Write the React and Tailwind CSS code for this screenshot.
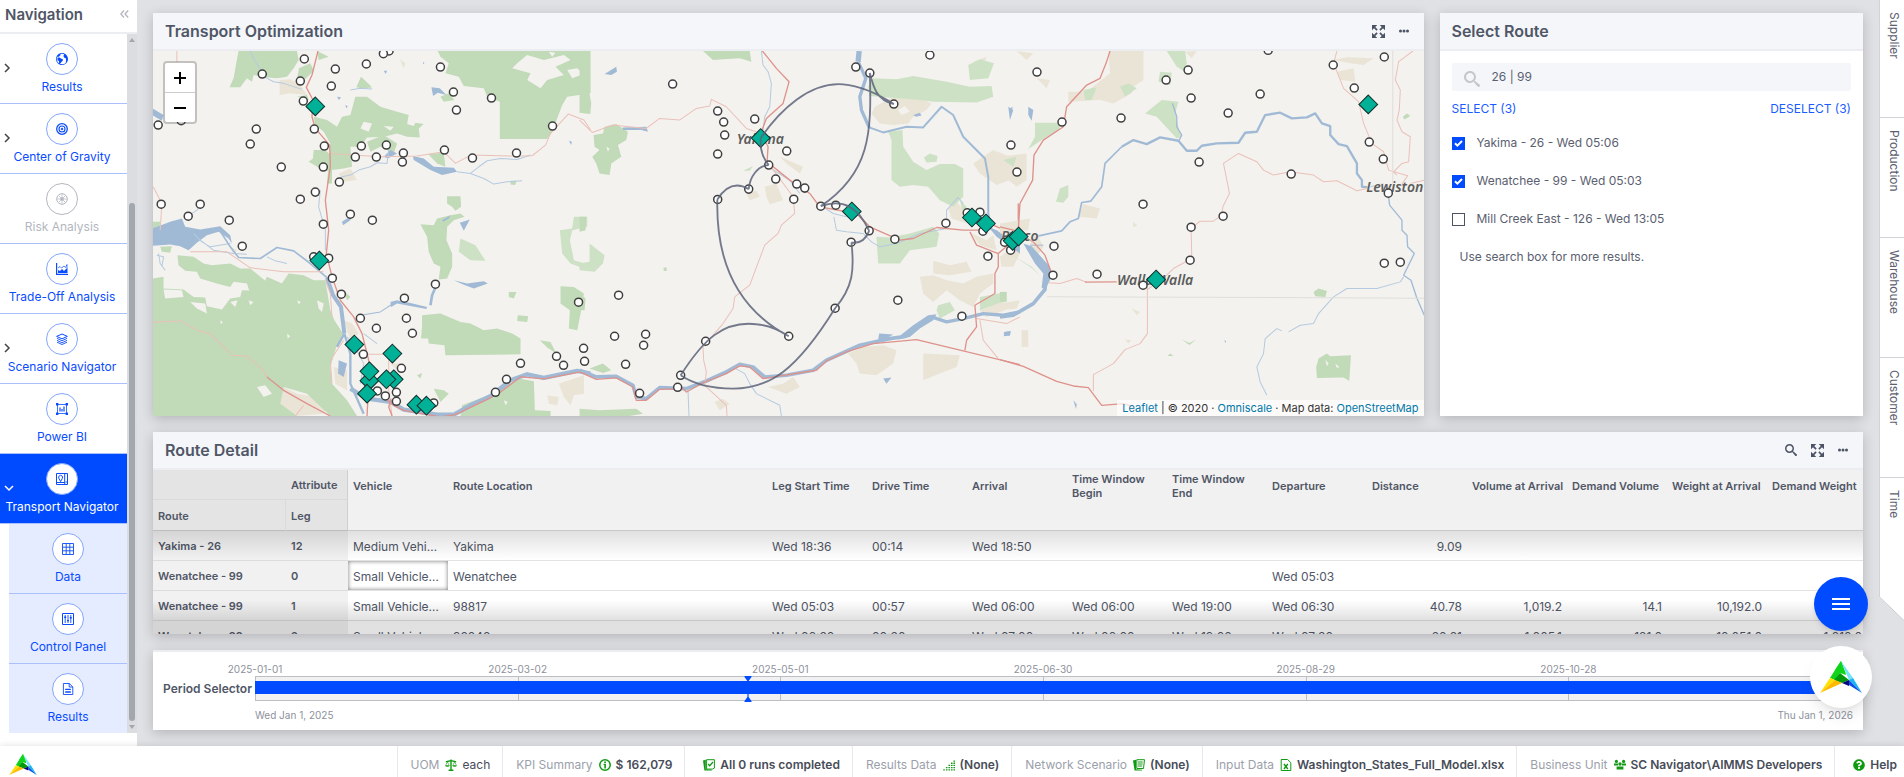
import React, { useState } from 'react';
import { ImEarth, ImEnlarge, ImSearch } from 'react-icons/im';
import { FaQuestionCircle } from 'react-icons/fa';

const Logo = ({ className }) => (
  <svg viewBox="0 0 42 32" className={className} aria-hidden="true">
    <path d="M21 0L15 9L20 11L26 13Z" fill="#00e800" />
    <path d="M15 9L10 17L15 19L20 12L26 14L21 0Z" fill="#0fd41a" />
    <path d="M20 12L14 19L22 22L29 19Z" fill="#009a0c" />
    <path d="M21 0L33 17L29 19Z" fill="#6fe3f7" />
    <path d="M33 17L42 32L29 19Z" fill="#19b5f5" />
    <path d="M29 19L42 32L29 24Z" fill="#0a50e8" />
    <path d="M29 19L22 22L29 25Z" fill="#06067e" />
    <path d="M10 17L15 19L0 32Z" fill="#ffe100" />
    <path d="M15 19L22 22L0 32Z" fill="#ffba00" />
  </svg>
);

const Svg = ({ children, size = 'size-3' }) => (
  <svg
    viewBox="0 0 12 12"
    className={size}
    fill="none"
    stroke="currentColor"
    aria-hidden="true"
  >
    {children}
  </svg>
);

const icons = {
  earth: <ImEarth className="size-3" />,
  target: (
    <Svg>
      <circle cx="6" cy="6" r="5.3" strokeWidth="1.3" />
      <circle cx="6" cy="6" r="3" strokeWidth="1.1" />
      <circle cx="6" cy="6" r="1" fill="currentColor" strokeWidth="0.5" />
    </Svg>
  ),
  compass: (
    <Svg>
      <circle cx="6" cy="6" r="5.3" strokeWidth="1" />
      <path d="M6 1v10M1 6h10M3 3l6 6M9 3l-6 6" strokeWidth="0.7" />
      <circle cx="6" cy="6" r="1.8" fill="currentColor" strokeWidth="0" />
    </Svg>
  ),
  stats: (
    <Svg>
      <path d="M0.6 0v11.4H12" strokeWidth="1.2" />
      <path
        d="M2 10V7l2 1 2-2 2 2 2-2 1.5-0.5V10z"
        fill="currentColor"
        stroke="none"
      />
      <path d="M2 5l2-1.5L5.5 5 8 3l1.5 1.5 1.5-3V6" strokeWidth="0.7" />
    </Svg>
  ),
  stack: (
    <Svg>
      <path d="M6 1l5.4 2.4L6 5.8 0.6 3.4z" strokeWidth="1" />
      <path
        d="M1 5.4L6 7.7l5-2.3M1 7.4l5 2.3 5-2.3M1 9.2l5 2.3 5-2.3"
        strokeWidth="0.9"
      />
    </Svg>
  ),
  powerbi: (
    <Svg>
      <path d="M1.5 1.5h9v9h-9z" strokeWidth="0.8" />
      <path
        d="M0 0h2.4v2.4H0zM9.6 0H12v2.4H9.6zM0 9.6h2.4V12H0zM9.6 9.6H12V12H9.6zM3.4 4.4h1.2v4.2H3.4zM5.4 6h1.2v2.6H5.4zM7.4 3.4h1.2v5.2H7.4z"
        fill="currentColor"
        stroke="none"
      />
    </Svg>
  ),
  mapPin: (
    <Svg>
      <path d="M0.5 0.5h11v11h-11zM8.7 0.5v11M0.5 9.5h8.2" strokeWidth="1" />
      <path d="M4.6 8.6L2.9 5.4a2 2 0 1 1 3.4 0z" strokeWidth="1" />
      <path d="M9.6 9h1.6" strokeWidth="1" />
    </Svg>
  ),
  grid: (
    <Svg>
      <path
        d="M0.5 0.5h11v11h-11zM0.5 4.2h11M0.5 7.8h11M4.2 0.5v11M7.8 0.5v11"
        strokeWidth="0.9"
      />
    </Svg>
  ),
  sliders: (
    <Svg>
      <path d="M0.5 0.5h11v11h-11z" strokeWidth="1" />
      <path d="M3.2 2v8M6 2v8M8.8 2v8" strokeWidth="0.9" />
      <path d="M2.2 4.2h2M5 7.6h2M7.8 4.8h2" strokeWidth="1.4" />
    </Svg>
  ),
  file: (
    <Svg>
      <path d="M1.4 0.5h6L10.8 4v7.5H1.4zM7.2 0.5V4h3.6" strokeWidth="0.9" />
      <path d="M3.2 6.4h5.6M3.2 9h5.6" strokeWidth="1.3" />
    </Svg>
  ),
  scale: (
    <Svg>
      <path d="M6 0.5v11M3.6 11.2h4.8M0.8 2.6C3 3 4 1.6 6 1.6s3 1.4 5.2 1" strokeWidth="1.4" />
      <path d="M2.4 2.8L0.6 6.4M2.4 2.8L4.2 6.4M9.6 2.8L7.8 6.4M9.6 2.8L11.4 6.4" strokeWidth="0.6" />
      <path d="M0.2 6.2h4.4a2.2 1.6 0 0 1-4.4 0zM7.4 6.2h4.4a2.2 1.6 0 0 1-4.4 0z" fill="currentColor" stroke="none" />
    </Svg>
  ),
  info: (
    <Svg>
      <circle cx="6" cy="6" r="5.2" strokeWidth="1.5" />
      <path d="M5.2 2.6h1.7v1.3H5.2zM4.6 4.7h2.3v4.8H5.3V6H4.6z" fill="currentColor" stroke="none" />
    </Svg>
  ),
  runs: (
    <Svg>
      <path d="M3.6 0.7h7.8v8.4l-2 1H3.6z" strokeWidth="1" />
      <path d="M0 1.6l2.8-0.9v9.6l6 0.4v0.9H1.4z" fill="currentColor" stroke="none" />
      <path d="M5.2 5l1.5 1.7L10 3" strokeWidth="1.3" />
    </Svg>
  ),
  bars: (
    <Svg>
      <path
        d="M1 11.5V9.2M3.7 11.5V7M6.2 11.5V5M8.8 11.5V3M11.2 11.5V0.5"
        strokeWidth="1.5"
        strokeDasharray="1.3 0.9"
      />
    </Svg>
  ),
  notes: (
    <Svg>
      <path d="M3.8 0.7h7.7l-1 8.8H3.8z" strokeWidth="1" />
      <path d="M5 3h4.8M5 5h4.6M5 7h4.2" strokeWidth="1" />
      <path d="M0 1.6l3-0.9v9.6l6 0.4v0.9H1.6z" fill="currentColor" stroke="none" />
    </Svg>
  ),
  excel: (
    <Svg>
      <path d="M1.2 0.5h6.4l3.2 3.2v7.8H1.2z" strokeWidth="1" />
      <path d="M4 5l3.8 5M7.8 5L4 10" strokeWidth="1.4" />
    </Svg>
  ),
  team: (
    <Svg>
      <g fill="currentColor" stroke="none">
        <circle cx="2.4" cy="2.4" r="1.6" />
        <circle cx="9.6" cy="2.4" r="1.6" />
        <circle cx="6" cy="5" r="1.7" />
        <path d="M0 4.4h4v2.2H0zM8 4.4h4v2.2H8zM2.6 7.4h6.8v3.2H2.6z" />
      </g>
    </Svg>
  ),
  help: <FaQuestionCircle className="size-3" />,
};

const navItems = [
  { label: 'Results', icon: 'earth', arrow: true },
  { label: 'Center of Gravity', icon: 'target', arrow: true },
  { label: 'Risk Analysis', icon: 'compass', disabled: true },
  { label: 'Trade-Off Analysis', icon: 'stats' },
  { label: 'Scenario Navigator', icon: 'stack', arrow: true },
  { label: 'Power BI', icon: 'powerbi' },
  { label: 'Transport Navigator', icon: 'mapPin', active: true },
  { label: 'Data', icon: 'grid', child: true },
  { label: 'Control Panel', icon: 'sliders', child: true },
  { label: 'Results', icon: 'file', child: true },
];

const NavItem = ({ item }) => {
  let tone = 'text-[#0a4bff] pr-[3px]';
  if (item.disabled) tone = 'text-[#b3b7c0] pr-[3px]';
  if (item.active) tone = 'bg-[#004bff] text-white pr-[3px]';
  if (item.child) tone = 'bg-[#e5ecff] ml-[9px] text-[#0a4bff]';

  return (
    <li>
      <a
        href="#"
        className={`relative flex h-[70px] flex-col items-center border-b border-[#a9c0fb] pt-[9px] ${tone}`}
      >
        {(item.arrow || item.active) && (
          <svg
            viewBox="0 0 10 10"
            className={`absolute top-[29px] size-[10px] ${
              item.active ? 'left-1 rotate-90' : 'left-[2px] text-[#444]'
            }`}
            fill="none"
            stroke="currentColor"
            strokeWidth="1.5"
          >
            <path d="M3 1l4 4-4 4" />
          </svg>
        )}
        <span
          className={`flex size-8 items-center justify-center rounded-full border bg-white ${
            item.disabled ? 'border-[#b3b7c0]' : 'border-[#85a6fd]'
          } ${item.active ? 'text-[#0a4bff]' : ''}`}
        >
          {icons[item.icon]}
        </span>
        <span className="mt-1 text-xs leading-4 whitespace-nowrap">
          {item.label}
        </span>
      </a>
    </li>
  );
};

// The map is cut in three tiles, each drawn at three times the screen size
const tiles = [
  {
    x: -2,
    land: '265,153 440,153 445,180 430,205 410,230 380,235 345,232 310,225 305,245 290,235 270,262 238,262 250,235 258,190|446,205 480,190 490,212 462,240 440,238|615,290 650,290 690,320 740,335 775,345 770,372 790,378 795,368 820,372 805,385 808,412 770,410 740,400 700,410 650,412 630,440 600,440 605,500 580,505 545,510 545,550 530,550 540,430 520,395 495,375 490,350 530,360 560,380 575,350 600,345|650,425 700,405 740,430 730,460 690,440 660,455|490,450 525,450 540,465 538,515 510,505 475,485 488,475|862,153 1320,153 1320,280 1250,290 1235,315 1205,395 1190,417 1048,417 1048,305 1010,290 1000,265 940,258 925,230 885,220 895,190 870,170|890,588 930,588 932,620 915,632 905,620 890,610|810,672 850,675 860,655 900,645 930,640 942,650 910,660 890,680 888,720 905,760 905,800 890,835 865,838 870,800 850,790 835,755 830,710|6,835 40,830 40,865 100,868 130,890 165,892 170,918 215,928 240,895 270,890 275,870 330,872 350,830 395,850 415,820 460,825 490,840 525,840 530,870 540,930 552,960 578,1000 558,1040 540,1100 545,1150 590,1200 620,1247 540,1247 470,1180 400,1160 390,1210 440,1247 6,1247|82,765 130,770 160,790 185,795 240,790 270,805 300,805 355,850 350,885 300,880 290,850 250,845 240,860 200,850 150,835 140,815 105,812 85,795|815,945 870,940 930,965 960,970 1000,990 1040,985 1085,1000 1110,1015 1110,1062 885,1065 882,1035 835,1030 833,1015 812,1015 815,975|1168,1020 1200,1025 1217,1060 1190,1042|1230,858 1270,860 1300,880 1290,940 1280,990 1255,985 1258,930 1230,910|1075,875 1098,875 1090,895 1075,890|1102,945 1133,948 1130,965 1100,962|930,1247 935,1215 1000,1190 1060,1160 1105,1135 1150,1143 1153,1230 1200,1232 1200,1247|618,262 632,230 648,245 665,262 640,266|870,290 895,280 912,300 880,305|833,462 880,458 885,500 860,490|500,153 535,170 505,180|1080,542 1098,542 1094,555 1080,553|6,665 30,665 28,685 6,685|30,740 65,738 60,758 35,755|440,290 470,285 475,300|850,1165 880,1170 895,1180 870,1205|800,1125 815,1118 810,1135|580,870 600,890 590,900',
    clear: '1100,190 1130,165 1180,180 1240,165 1260,180 1215,200 1240,225 1190,240 1170,265 1130,240 1140,220 1085,205|1195,155 1215,158 1205,170|1250,210 1280,205 1300,222 1265,235|640,365 665,370 655,395 630,385|700,378 730,380 720,392|120,905 165,910 170,940 140,925|240,905 262,900 255,920|40,868 95,870 100,890 45,895|210,960 218,965 212,972|295,900 310,905 300,915|440,900 452,905 445,912|500,900 520,910 515,935 505,925|410,1000 420,1008 412,1015|320,1160 345,1155 365,1180 340,1190|1060,1200 1072,1205 1065,1215',
    light: '930,715 975,735 1005,782 960,780 925,755|1270,650 1310,650 1310,680 1265,690 1258,720 1270,780 1320,795 1320,812 1260,790 1235,760 1228,690 1265,685',
    tan: '388,240 420,238 450,255 470,285 420,280 388,285|565,520 600,505 620,540 580,545|400,1160 440,1180 500,1190 530,1215 520,1240 440,1247 385,1215 370,1180|580,960 605,970 625,1000 600,1020|550,1100 590,1110 590,1170 555,1150|1225,1150 1300,1125 1300,1180 1270,1185 1260,1215 1240,1190|748,178 765,190 760,205|1190,1185 1225,1190 1220,1215 1195,1210|240,740 260,750 250,765|720,1090 750,1090 740,1110',
    water: '6,685 60,665 95,655 105,680 150,688 210,678 240,705 245,730 235,715 205,695 170,705 140,728 115,750 90,738 60,733 6,737|787,468 820,475 850,500 910,503 920,515 875,525 840,510 790,480|910,840 950,850 1000,843 1012,850 970,865 940,854|720,905 740,900 780,908 830,920 828,926 780,917 740,910 722,920|843,262 868,265 888,285 862,278 848,288|700,470 720,450 740,460 712,475|575,665 605,645 600,660 578,675|928,668 958,658 940,692|875,660 900,645 895,655 878,665|6,325 40,345 35,362 6,345|565,1080 590,1090 580,1130 563,1120|1255,422 1264,425 1262,435|700,212 710,212 706,222|560,290 572,292 566,300|585,315 592,318 588,325|818,185 822,190 818,193',
    rivers: [
      ['M205 685L240 740L265 772L330 775L380 742L430 752L480 790L530 832', 5],
      ['M530 832L548 885L572 920L582 1000', 12],
      ['M582 1000L600 1060L600 1150L640 1240M582 1000L560 1040', 7],
      ['M600 1165L650 1195L720 1205L760 1228L860 1243L910 1243L960 1215L1020 1188L1080 1140L1130 1122L1180 1133L1280 1112L1320 1120', 13],
      ['M840 915L845 885L858 855', 8],
      ['M630 945L690 935L725 912', 3],
    ],
    creeks: 'M300 153L312 180L325 200L345 232L370 245L400 250L455 268M510 570L505 620L525 690L525 750M560 545L575 530L600 525L625 510L660 500L680 488L710 490L715 450M920 515L960 520L985 500L1010 482L1050 475L1100 478L1140 465M960 520L1000 535L1030 552L1070 545L1115 542M130 700L155 725L180 740L240 730M150 720L190 750L250 760L290 762M25 760L30 790L45 810M350 770L375 782L410 790M600 270L630 265L665 267M640 1000L680 1030M590 1010L620 1050L640 1090L630 1150M150 615L140 630L110 650M20 765L40 770L35 800',
    red: 'M503 153L485 225L468 262L488 300L485 350L495 385L538 435L540 500L525 600L535 690L528 760L545 830L570 900L610 950L635 1000L655 1080L655 1150L650 1247M350 1130L400 1170L470 1210L540 1247M700 1190L730 1215L760 1230L870 1250L915 1243L1010 1197L1050 1175L1110 1130L1180 1136L1290 1115L1320 1125M725 1247L715 1220L722 1195',
    pink: 'M540 460L690 470L800 468L880 455L915 490L960 465L1100 468L1145 467L1185 435L1200 400L1253 342L1300 360L1320 390M9 560L35 610L30 690M120 755L230 755L300 803L400 815L520 815M650 1062L715 1062L715 1170L725 1247M9 965L90 962L145 992L180 1000L245 1065L290 1068L340 1110L350 1130M80 153L80 185M545 950L540 880L525 840M545 1150L540 1080L580 1020M435 1247L460 1215',
    dots: '462,177 336,222 555,207 648,192 716,153 699,161 450,243 543,258 459,303 870,201 909,276 1023,294 918,330 24,375 93,362 318,387 300,432 492,387 522,438 633,438 708,435 615,471 678,471 759,459 756,486 882,450 966,474 1098,459 1206,378 393,501 519,501 567,546 495,576 450,597 33,612 150,612 114,648 237,660 276,738 600,642 666,660 519,672 490,770 535,774 546,834 573,882 855,852 762,894 630,954 768,954 678,984 786,999 1284,906 639,1062 753,1104 681,1172 705,1187 738,1176 738,1203 850,1208 1110,1089 1218,1068 1239,1095 1299,1044 1302,1083 1068,1137 1035,1176',
    sites: '495,319 507,781 612,1033 726,1060 657,1141 657,1113 730,1137 708,1137 650,1180 798,1213 828,1216',
  },
  {
    x: 427,
    land: '370,153 510,153 515,185 480,175 430,178 400,180|0,205 20,225 35,310 32,342 0,338|75,380 110,372 145,395 140,420 115,435 125,470 95,490 90,525 60,520 50,490 38,470 60,450 45,440 42,405 70,400|0,650 20,650 18,690 0,695|0,1225 60,1230 170,1225 190,1240 150,1247 0,1247|252,802 261,802 261,812 252,812|30,1105 70,1090 95,1110 70,1118|0,880 18,895 15,930 0,930',
    clear: '80,440 90,445 85,455|955,330 975,318 990,335 965,345',
    light: '865,260 880,235 950,238 1000,228 1100,245 1170,260 1235,258 1240,290 1190,307 1060,305 1020,300 870,288|925,395 968,390 970,440 1000,485 1040,510 1080,492 1125,492 1150,505 1150,590 1120,620 1080,600 1045,560 1000,555 960,560 935,540 935,420|1165,195 1200,178 1242,190 1225,235 1170,240|1032,472 1050,460 1073,468 1070,485 1040,487|890,710 930,712 990,700 1060,680 1078,700 1070,740 990,750 960,790 895,790|1075,915 1110,905 1125,930 1080,955 1070,930|30,730 75,765 70,790 45,815 0,810 0,790 30,785|1200,890 1280,875 1280,900 1200,930|490,512 520,498 510,512|1140,600 1160,620 1150,640',
    tan: '885,320 940,290 1000,285 1055,310 1040,330 1000,350 985,370 940,375 900,370 875,340|1130,605 1165,645 1160,670 1115,655 1105,625|1175,700 1220,720 1240,705 1250,750 1200,735|1260,770 1300,740 1320,760 1300,800 1265,800|1060,782 1110,795 1160,785 1175,815 1110,825 1060,820|1020,830 1060,825 1100,840 1150,850 1190,830 1240,820 1240,850 1200,880 1180,920 1140,900 1100,870 1060,905 1030,880|805,1060 850,1040 910,1035 950,1050 940,1090 890,1125 840,1120 830,1090|1030,1060 1140,1065 1130,1100 1080,1120 1030,1140|500,580 530,572 540,590 510,600|555,560 590,550 610,600 570,612 560,590|565,1160 610,1150 640,1130 660,1160 620,1180|1180,490 1240,450 1290,470 1290,540 1250,555 1200,520|405,1205 430,1195 450,1210 420,1230|985,710 1060,685 1050,720 1000,745|1180,185 1220,170 1210,200|600,470 670,500 660,520 620,490|1200,930 1270,900 1275,930 1220,950',
    water: '962,1005 1000,975 1045,945 1070,942 1060,960 1020,985 990,1010 955,1018|75,222 110,200 112,215 95,225|130,382 200,380 205,395 185,390 130,390|1225,680 1250,690 1320,735 1320,760 1250,710|910,1135 935,1132 920,1150|1275,995 1292,993 1290,1006 1273,1005|1000,345 1020,338 1025,346 1008,350|1285,320 1300,330 1290,360|898,1000 940,1003 920,1015 895,1018',
    rivers: [
      ['M838 153L835 185', 16],
      ['M835 185L858 235L840 290L845 330L868 382', 10],
      ['M868 382L910 397L980 380L1030 382L1085 320L1120 345L1150 410L1215 475L1225 530L1225 640L1235 690', 6],
      ['M0 1110L50 1130L110 1128L160 1155L170 1190L200 1195L240 1162L320 1165L380 1142L440 1115L480 1092L520 1100L555 1130L620 1125L700 1110L740 1080L840 1035L930 1015L980 1008', 11],
      ['M1055 950L1100 965L1150 955L1210 940L1270 945L1320 935', 10],
    ],
    creeks: 'M545 153L550 195L565 215L575 250L570 320L555 350L550 390M468 1105L495 1120L510 1150L530 1180L600 1215L605 1247M325 1170L328 1247M762 650L770 690L800 695L850 700L875 725L900 740L950 730L1020 700L1100 685M1100 680L1100 630L1135 592L1150 610M730 620L760 640L800 650M565 500L630 540L660 580',
    red: 'M548 153L590 205L628 245L610 310L560 355L545 395L565 440L562 485L630 540L690 580L720 620L830 640L870 680L960 720L1000 715L1070 682L1150 690L1210 690M1170 695L1190 735L1255 760L1255 800L1245 820L1245 880L1185 915L1190 980L1160 1020L1155 1050M1240 675L1320 710M1255 760L1290 730M0 1115L50 1137L110 1133L160 1160L170 1200L200 1200L240 1167L310 1165L320 1175L370 1148L440 1120L480 1097L510 1100L550 1135L710 1110L740 1082L800 1055L880 1030L1010 1018L1100 1040L1320 1093M1315 610L1315 680',
    pink: 'M0 360L38 397L100 375L200 385L240 355L300 360L350 325L390 318L395 298L440 320L500 385L545 400M570 495L640 590L645 640L605 675L595 700L555 735L510 855L465 890L460 925L430 970L370 1040L372 1080L380 1115L375 1155L440 1215L442 1247M1190 955L1280 970L1320 950M1200 960L1210 1020L1255 1075',
    dots: '279,252 414,333 432,366 435,405 414,462 525,357 621,453 567,495 588,537 507,567 414,598 651,552 675,564 642,597 723,618 768,615 828,201 870,219 942,312 1050,165 868,692 814,726 945,717 1098,669 1162,638 1200,636 1209,693 1224,768 1274,726 1292,750 1293,435 1311,516 954,900 1146,948 766,924 627,1008 378,1023 303,1125 294,1161 180,1179 138,1092 192,1035 198,1002 105,1008 117,885',
    sites: '543,414 816,634 1176,652 1218,670 1298,722 1316,709',
  },
  {
    x: 847,
    land: '948,1100 955,1075 980,1060 990,1068 1052,1065 1047,1142 1030,1132 950,1133|940,875 955,865 980,872 975,890 945,888|545,1018 568,1028 588,1018 568,1034|1208,350 1220,340 1230,348 1212,358|503,1067 510,1060 520,1067|0,875 20,875 20,905 0,905',
    clear: '975,1078 985,1090 980,1098|1005,1090 1018,1100 1010,1103',
    light: '500,153 555,153 560,190 550,212 530,200|480,215 515,218 510,255 475,245|485,300 535,305 525,340 540,400 545,410 530,415 470,350 435,340|105,368 180,368 178,390 140,410 85,447 105,410|180,565 205,555 205,590 190,608 168,605|360,260 385,250 410,265 375,290|250,270 290,262 275,300 255,300|10,480 50,470 40,500|30,760 90,800 120,825 95,800',
    tan: '325,153 430,153 430,240 400,260 395,280 340,310 300,300 205,305 205,275 260,275 330,220|1010,215 1060,205 1065,245 1020,240|1000,180 1040,172 1120,175 1090,195 1050,190|0,470 80,460 80,540 50,560 0,520|0,670 90,655 85,690 60,690 0,700|110,700 130,740 110,770 90,730|250,612 300,625 290,655 235,650|65,990 85,990 85,1040 65,1040|50,153 100,160 80,180|110,235 150,240 140,265|555,155 590,153 575,175|398,665 412,675 400,682|0,910 60,900 50,925 0,930|395,925 420,935 410,945|375,1018 395,1020 385,1030',
    water: '85,320 100,330 95,362 85,345|30,325 38,320 32,355|12,995 32,993 30,1006 12,1008|220,1200 230,1212 228,1226|672,1020 678,1022 676,1028|70,730 95,738 150,800 155,830 135,870 125,862 130,820 105,790',
    rivers: [
      ['M138 835L135 868L100 910L40 945L0 950', 11],
      ['M113 708L185 692L210 665L235 655L245 607L272 603L305 560L315 490L365 440', 5],
      ['M365 440L400 420L440 432L480 412L535 422L560 452L590 452L605 437L650 430L715 428L735 398L770 395L795 345L840 338L875 355L920 352L945 340L965 370L990 378L990 405L1015 432L1040 438L1070 490L1070 520L1085 540L1085 560L1105 562', 7],
      ['M1165 590L1168 615L1205 660L1205 690L1220 705L1222 740L1242 760L1210 825L1232 840L1250 895L1272 945', 4],
      ['M517 310L530 350L530 380L545 405L535 425', 4],
      ['M90 735L130 735', 3],
    ],
    creeks: 'M865 995L900 975L940 970L955 940L1000 890L1040 865L1130 865L1200 845L1210 830M845 992L830 985L795 1015L790 1060L770 1100L780 1145L800 1185M1110 560L1150 550',
    red: 'M330 153L318 190L300 235L260 255L200 320L190 380L130 420L102 465L98 540L60 610L55 690M0 680L40 690L100 725L135 765L155 820M0 1078L70 1098L170 1143L220 1157L265 1162L305 1215L370 1210L400 1220M255 846L350 845',
    pink: 'M145 848L180 850L230 835L260 846M400 1220L400 1247M442 860L442 1000L420 1030L375 1048L340 1090L280 1123L280 1172M440 870L500 825L520 805L575 775L573 685L600 663L640 663L665 645L668 620L688 580L670 490L715 460L770 485L790 510L820 525L870 515L940 525L970 545L1010 542L1070 572L1100 565M1010 153L1000 190L1030 265L1075 305L1090 370L1115 430L1150 455L1165 510L1222 527L1205 552M1238 153L1195 185L1185 240L1200 270L1197 330L1190 360L1205 395L1230 410L1225 485L1205 490L1180 515L1190 525M1230 550L1272 540',
    dots: '111,216 186,366 363,354 498,240 564,210 573,294 684,339 780,282 804,151 999,195 1062,264 1152,171 1107,426 1149,477 873,522 597,486 429,612 669,648 573,681 570,780 162,738 159,825 291,822 429,855 1164,579 1152,789 1200,786',
    sites: '1104,313 468,838',
  },
];

const cities = [
  { name: 'Yakima', x: 584, y: 93 },
  { name: 'Pasco', x: 848, y: 190 },
  { name: 'Walla Walla', x: 964, y: 234 },
  { name: 'Lewiston', x: 1213, y: 141 },
];

const points = (list) => list.split(' ').map((pair) => pair.split(','));

const Areas = ({ list, fill }) =>
  list
    .split('|')
    .map((area, i) => <polygon key={i} points={area} fill={fill} />);

const RouteMap = () => (
  <svg
    viewBox="0 0 1271 365"
    preserveAspectRatio="xMidYMid slice"
    className="absolute inset-0 size-full bg-[#f3f2ee]"
    role="img"
    aria-label="Route map"
  >
    {tiles.map((t) => (
      <g
        key={t.x}
        transform={`translate(${t.x} -51) scale(0.33333)`}
        fill="none"
        strokeLinejoin="round"
      >
        <Areas list={t.tan} fill="#eae4d6" />
        <Areas list={t.land} fill="#c1dab8" />
        <Areas list={t.light} fill="#cde1c5" />
        <Areas list={t.clear} fill="#f3f2ee" />
        <Areas list={t.water} fill="#a0bad6" />
        <path d={t.creeks} stroke="#b5cae0" strokeWidth="3" />
        {t.rivers.map(([d, w]) => (
          <path key={d} d={d} stroke="#a0bad6" strokeWidth={w} />
        ))}
        <path d={t.pink} stroke="#ebc0b9" strokeWidth="3" />
        <path d={t.red} stroke="#de928b" strokeWidth="4" />
      </g>
    ))}
    <path
      d="M1239.5 0V136M894 245.5L1271 247"
      stroke="#dfdedc"
      strokeWidth="1"
    />
    {cities.map((c) => (
      <text
        key={c.name}
        x={c.x}
        y={c.y}
        className="fill-[#5c5c5c] stroke-[#f3f2ee] stroke-1 text-[14px] font-semibold italic [font-family:'Noto_Sans',sans-serif] [paint-order:stroke]"
      >
        {c.name}
      </text>
    ))}
    {tiles.map((t) => (
      <g key={t.x} transform={`translate(${t.x} -51) scale(0.33333)`}>
        {points(t.dots).map(([x, y]) => (
          <circle
            key={`${x}-${y}`}
            cx={x}
            cy={y}
            r="12"
            fill="#fff"
            stroke="#3f3f3f"
            strokeWidth="4.5"
          />
        ))}
        {points(t.sites).map(([x, y]) => (
          <path
            key={`${x}-${y}`}
            d={`M${x} ${y - 28}l28 28-28 28-28-28z`}
            fill="#00b197"
            stroke="#10302b"
            strokeWidth="3"
          />
        ))}
      </g>
    ))}
    <path
      transform="translate(427 -51) scale(0.33333)"
      d="M543 414C600 330 690 245 790 253C850 258 900 285 942 312M870 219C880 260 890 300 942 312M870 219C876 400 870 520 723 618M723 618C790 595 835 620 868 692M868 692C855 725 835 730 815 727M815 727C824 810 820 860 766 924M766 924C650 1110 570 1165 460 1165C390 1165 340 1150 303 1125M303 1125C370 1020 430 960 530 972C570 975 600 990 627 1008M627 1008C480 930 408 790 413 598M413 598C440 555 470 545 507 567M507 567C510 530 535 495 567 495M567 495C550 475 540 450 543 414"
      fill="none"
      stroke="#5c6379"
      strokeOpacity="0.85"
      strokeWidth="5.5"
    />
  </svg>
);

const PanelButton = ({ label, children }) => (
  <button type="button" aria-label={label} className="text-[#4c5365]">
    {children}
  </button>
);

const Dots = () => (
  <svg viewBox="0 0 10 4" className="h-1 w-[10px]" fill="currentColor">
    <circle cx="1.5" cy="2" r="1.5" />
    <circle cx="5" cy="2" r="1.5" />
    <circle cx="8.5" cy="2" r="1.5" />
  </svg>
);

const Panel = ({ title, actions, children }) => (
  <section className="flex min-h-0 flex-col bg-white shadow-[0_3px_12px_rgba(0,0,0,0.2)]">
    <header className="flex h-[38px] shrink-0 items-center justify-between border-b-2 border-[#ebedf1] bg-[#f4f6fa] px-3">
      <h2 className="text-base font-semibold text-[#505666]">{title}</h2>
      <div className="flex items-center gap-[14px] pr-[3px]">{actions}</div>
    </header>
    {children}
  </section>
);

const columns = [
  'Vehicle',
  'Route Location',
  'Leg Start Time',
  'Drive Time',
  'Arrival',
  'Time Window Begin',
  'Time Window End',
  'Departure',
  'Distance',
  'Volume at Arrival',
  'Demand Volume',
  'Weight at Arrival',
  'Demand Weight',
];

const rows = [
  ['Yakima - 26', '12', 'Medium Vehicles', 'Yakima', 'Wed 18:36', '00:14', 'Wed 18:50', '', '', '', '9.09', '', '', '', ''],
  ['Wenatchee - 99', '0', 'Small Vehicles A', 'Wenatchee', '', '', '', '', '', 'Wed 05:03', '', '', '', '', ''],
  ['Wenatchee - 99', '1', 'Small Vehicles A', '98817', 'Wed 05:03', '00:57', 'Wed 06:00', 'Wed 06:00', 'Wed 19:00', 'Wed 06:30', '40.78', '1,019.2', '14.1', '10,192.0', ''],
  ['Wenatchee - 99', '2', 'Small Vehicles A', '98848', 'Wed 06:30', '00:30', 'Wed 07:00', 'Wed 06:00', 'Wed 19:00', 'Wed 07:30', '20.21', '1,005.1', '121.0', '10,051.0', '1,210.0'],
];

const RouteTable = () => (
  <div className="relative min-h-0 flex-1 overflow-hidden bg-[#e4e4e4]">
    <table className="w-[calc(100%+4px)] table-fixed border-separate border-spacing-0 text-left text-[#505666]">
      <colgroup>
        <col className="w-[133px]" />
        <col className="w-[62px]" />
        <col className="w-[100px]" />
        <col />
        {columns.slice(2).map((c) => (
          <col key={c} className="w-[100px]" />
        ))}
      </colgroup>
      <thead className="text-[11px] leading-[14px]">
        <tr className="h-[30px]">
          <th className="border-b border-[#dadada] bg-[#e4e4e4]" />
          <th className="border-r border-b border-r-[#cfcfcf] border-b-[#dadada] bg-[#e4e4e4] px-[5px] font-semibold">
            Attribute
          </th>
          {columns.map((c) => (
            <th
              key={c}
              rowSpan={2}
              className="border-b border-[#c8c9cb] bg-[#f1f1f1] px-[5px] align-top font-semibold"
            >
              <div className="flex h-8 items-center">
                <span className={c.startsWith('Time') ? '' : 'whitespace-nowrap'}>
                  {c}
                </span>
              </div>
            </th>
          ))}
        </tr>
        <tr className="h-[31px]">
          <th className="border-r border-b border-r-[#dadada] border-b-[#bcbdbf] bg-[#e4e4e4] px-[5px] pt-[2px] font-semibold">
            Route
          </th>
          <th className="border-r border-b border-r-[#cfcfcf] border-b-[#bcbdbf] bg-[#e4e4e4] px-[5px] pt-[2px] font-semibold">
            Leg
          </th>
        </tr>
      </thead>
      <tbody>
        {rows.map((row, r) => (
          <tr key={r} className="h-[30px]">
            {row.map((cell, i) =>
              i < 2 ? (
                <th
                  key={i}
                  className="border-b border-[#dcdcdc] bg-[#f1f1f1] px-[5px] text-[11px] font-semibold"
                >
                  {cell}
                </th>
              ) : (
                <td
                  key={i}
                  className={`truncate border-b border-[#e2e2e2] bg-white px-[5px] pt-[2px] text-xs ${
                    i > 9 ? 'text-right' : ''
                  } ${
                    r === 1 && i === 2
                      ? 'shadow-[inset_0_0_4px_rgba(0,0,0,0.55)]'
                      : ''
                  }`}
                >
                  {cell}
                </td>
              )
            )}
          </tr>
        ))}
      </tbody>
    </table>
    <div className="pointer-events-none absolute inset-x-0 top-[61px] h-[29px] bg-linear-to-b from-black/12 to-transparent" />
    <div className="pointer-events-none absolute inset-x-0 top-[130px] bottom-0 bg-linear-to-b from-transparent to-black/12 to-60%" />
  </div>
);

const dayTicks = [
  { label: '2025-01-01', day: 0 },
  { label: '2025-03-02', day: 60 },
  { label: '2025-05-01', day: 120 },
  { label: '2025-06-30', day: 180 },
  { label: '2025-08-29', day: 240 },
  { label: '2025-10-28', day: 300 },
  { label: '2025-12-27', day: 360 },
];

const PeriodSelector = () => {
  const [day, setDay] = useState(112);

  return (
    <section className="flex border-t-2 border-[#ebedf1] bg-white px-[10px] pt-[10px] shadow-[0_3px_12px_rgba(0,0,0,0.2)]">
      <label
        htmlFor="period"
        className="w-[92px] shrink-0 pt-[17px] text-xs leading-5 font-semibold whitespace-nowrap text-[#505666]"
      >
        Period Selector
      </label>
      <div className="min-w-0 flex-1">
        <div className="relative h-[14px] text-[10px] leading-[15px] text-[#8d919c]">
          {dayTicks.map((t) => (
            <span
              key={t.day}
              className="absolute -translate-x-1/2"
              style={{ left: `${(t.day / 365) * 100}%` }}
            >
              {t.label}
            </span>
          ))}
        </div>
        <div className="relative h-[25px] border-y border-[#bcbec6] bg-[#f1f1f2]">
          {dayTicks.map((t) => (
            <span
              key={t.day}
              className="absolute inset-y-0 w-px bg-[#bcbec6]"
              style={{ left: `${(t.day / 365) * 100}%` }}
            />
          ))}
          <div className="absolute inset-x-0 top-1 h-[13px] bg-[#004bff]" />
          <svg
            viewBox="0 0 8 26"
            className="absolute -top-px h-[26px] w-2 -translate-x-1/2"
            style={{ left: `${((day + 0.5) / 365) * 100}%` }}
            fill="#004bff"
          >
            <path d="M0.5 0h7v1L4.6 5v16l2.9 4v1h-7v-1l2.9-4V5L0.5 1z" />
          </svg>
          <input
            id="period"
            type="range"
            min="0"
            max="365"
            value={day}
            onChange={(e) => setDay(Number(e.target.value))}
            className="absolute inset-0 size-full opacity-0"
          />
        </div>
        <div className="mt-[7px] flex justify-between text-[10px] leading-[14px] text-[#8d919c]">
          <span>Wed Jan 1, 2025</span>
          <span>Thu Jan 1, 2026</span>
        </div>
      </div>
    </section>
  );
};

const RouteFilter = () => {
  const [query, setQuery] = useState('26 | 99');
  const [routes, setRoutes] = useState([
    { name: 'Yakima - 26 - Wed 05:06', checked: true },
    { name: 'Wenatchee - 99 - Wed 05:03', checked: true },
    { name: 'Mill Creek East - 126 - Wed 13:05', checked: false },
  ]);

  const setAll = (checked) => setRoutes(routes.map((r) => ({ ...r, checked })));

  const toggle = (index) =>
    setRoutes(
      routes.map((r, i) => (i === index ? { ...r, checked: !r.checked } : r))
    );

  return (
    <div className="px-3 pt-3 text-xs text-[#5b6070]">
      <label className="flex h-7 items-center gap-3 rounded-xs bg-[#f4f6fa] pl-3">
        <ImSearch className="mt-1 size-4 shrink-0 text-[#c6c7ca]" />
        <input
          type="text"
          aria-label="Search routes"
          value={query}
          onChange={(e) => setQuery(e.target.value)}
          className="min-w-0 flex-1 bg-transparent outline-none"
        />
      </label>
      <div className="mt-2 flex justify-between leading-5 text-[#1a5cff]">
        <button type="button" onClick={() => setAll(true)}>
          SELECT (3)
        </button>
        <button type="button" onClick={() => setAll(false)}>
          DESELECT (3)
        </button>
      </div>
      <ul className="mt-[5px]">
        {routes.map((route, i) => (
          <li key={route.name}>
            <label className="flex h-[38px] items-center gap-3">
              <span className="relative size-[13px]">
                <input
                  type="checkbox"
                  checked={route.checked}
                  onChange={() => toggle(i)}
                  className="block size-[13px] appearance-none border border-[#4c5365] bg-white checked:border-[#004bff] checked:bg-[#004bff]"
                />
                {route.checked && (
                  <svg
                    viewBox="0 0 13 13"
                    className="pointer-events-none absolute inset-0"
                    fill="none"
                    stroke="#fff"
                    strokeWidth="2"
                  >
                    <path d="M3 6.3l2.4 2.4L10 4" />
                  </svg>
                )}
              </span>
              {route.name}
            </label>
          </li>
        ))}
      </ul>
      <p className="pl-2 leading-[38px]">Use search box for more results.</p>
    </div>
  );
};

const statusItems = [
  { label: 'UOM', icon: 'scale', value: 'each', plain: true },
  { label: 'KPI Summary', icon: 'info', value: '$ 162,079' },
  { icon: 'runs', value: 'All 0 runs completed' },
  { label: 'Results Data', icon: 'bars', value: '(None)' },
  { label: 'Network Scenario', icon: 'notes', value: '(None)' },
  { label: 'Input Data', icon: 'excel', value: 'Washington_States_Full_Model.xlsx' },
  { label: 'Business Unit', icon: 'team', value: 'SC Navigator\\AIMMS Developers' },
  { icon: 'help', value: 'Help', last: true },
];

const StatusBar = () => (
  <footer className="relative flex h-[31px] shrink-0 items-stretch justify-between bg-white pl-[9px] text-xs shadow-[0_-1px_6px_rgba(0,0,0,0.1)]">
    <Logo className="mt-2 h-[21px] w-7" />
    <ul className="flex">
      {statusItems.map((s) => (
        <li
          key={s.value + s.icon}
          className={`flex items-center border-l border-[#e8e9ee] pt-[6px] ${
            s.label ? 'pl-[13px]' : 'pl-[18px]'
          } ${s.last ? 'pr-[7px]' : 'pr-3'}`}
        >
          {s.label && <span className="mr-[6px] text-[#9b9fab]">{s.label}</span>}
          <span className="w-[13px] text-[#109a12]">{icons[s.icon]}</span>
          <span
            className={`ml-1 text-[#474c59] ${s.plain ? '' : 'font-semibold'}`}
          >
            {s.value}
          </span>
        </li>
      ))}
    </ul>
  </footer>
);

const sideTabs = ['Supplier', 'Production', 'Warehouse', 'Customer', 'Time'];

const App = () => (
  <div className="flex h-screen flex-col overflow-hidden bg-[#e0e1e5] font-['Inter',sans-serif]">
    <div className="flex min-h-0 flex-1">
      <nav className="flex w-[137px] shrink-0 flex-col bg-white">
        <div className="flex h-[34px] shrink-0 items-center justify-between border-b-2 border-[#ebedf1] pr-2 pl-[5px]">
          <h1 className="pb-[2px] text-[15px] leading-5 font-semibold text-[#505666]">
            Navigation
          </h1>
          <button type="button" aria-label="Collapse" className="text-[#b3b5bc]">
            <svg
              viewBox="0 0 9 8"
              className="mb-1 h-2 w-[9px]"
              fill="none"
              stroke="currentColor"
              strokeWidth="1.3"
            >
              <path d="M4 0.5L0.8 4 4 7.5M8.2 0.5L5 4l3.2 3.5" />
            </svg>
          </button>
        </div>
        <div className="mb-[13px] flex min-h-0 flex-1 overflow-hidden">
          <ul className="min-w-0 flex-1">
            {navItems.map((item, i) => (
              <NavItem key={i} item={item} />
            ))}
          </ul>
          <div className="flex w-[10px] flex-col items-center bg-[#dcdde1] py-1 text-[#a3a7ae]">
            <svg viewBox="0 0 6 4" className="h-1 w-[6px]" fill="currentColor">
              <path d="M3 0l3 4H0z" />
            </svg>
            <div className="min-h-0 flex-[161]" />
            <div className="mb-1 min-h-0 w-[6px] flex-[518] rounded-full bg-current" />
            <svg viewBox="0 0 6 4" className="h-1 w-[6px]" fill="currentColor">
              <path d="M0 0h6L3 4z" />
            </svg>
          </div>
        </div>
      </nav>

      <main className="grid min-w-0 flex-1 grid-rows-[minmax(0,2fr)_minmax(0,1fr)_80px] gap-4 px-4 pt-[13px] pb-4">
        <div className="grid min-h-0 grid-cols-[3fr_1fr] gap-4">
          <Panel
            title="Transport Optimization"
            actions={
              <>
                <PanelButton label="Full screen">
                  <ImEnlarge className="size-[13px]" />
                </PanelButton>
                <PanelButton label="More">
                  <Dots />
                </PanelButton>
              </>
            }
          >
            <div className="relative min-h-0 flex-1 overflow-hidden">
              <RouteMap />
              <div className="absolute top-[10px] left-[10px] flex flex-col rounded border-2 border-black/20 bg-white bg-clip-padding text-black">
                <button
                  type="button"
                  aria-label="Zoom in"
                  className="flex size-[30px] items-center justify-center border-b border-[#ccc]"
                >
                  <svg viewBox="0 0 12 12" className="size-3" stroke="currentColor" strokeWidth="2">
                    <path d="M0 6h12M6 0v12" />
                  </svg>
                </button>
                <button
                  type="button"
                  aria-label="Zoom out"
                  className="flex h-[29px] w-[30px] items-center justify-center"
                >
                  <svg viewBox="0 0 12 12" className="size-3" stroke="currentColor" strokeWidth="2">
                    <path d="M0 6h12" />
                  </svg>
                </button>
              </div>
              <div className="absolute right-0 bottom-0 bg-white/70 px-[5px] text-[11px] leading-4 text-[#333]">
                <a href="#" className="text-[#0078a8]">Leaflet</a> | © 2020 ·{' '}
                <a href="#" className="text-[#0078a8]">Omniscale</a> · Map data:{' '}
                <a href="#" className="text-[#0078a8]">OpenStreetMap</a>
              </div>
            </div>
          </Panel>
          <Panel title="Select Route">
            <RouteFilter />
          </Panel>
        </div>

        <Panel
          title="Route Detail"
          actions={
            <>
              <PanelButton label="Search">
                <ImSearch className="size-3" />
              </PanelButton>
              <PanelButton label="Full screen">
                <ImEnlarge className="size-[13px]" />
              </PanelButton>
              <PanelButton label="More">
                <Dots />
              </PanelButton>
            </>
          }
        >
          <RouteTable />
        </Panel>

        <PeriodSelector />
      </main>

      <aside className="w-[25px] shrink-0">
        {sideTabs.map((tab) => (
          <button
            key={tab}
            type="button"
            className="flex h-[120px] w-full items-center justify-start border-b border-l border-[#d2d3d8] bg-white pt-3 pl-1 text-xs text-[#5b6070] [writing-mode:vertical-rl] first:h-[118px] last-of-type:h-[119px] last-of-type:border-b-0"
          >
            {tab}
          </button>
        ))}
        <svg viewBox="0 0 25 24" className="block h-6 w-[25px]">
          <path d="M0 0h25v24z" fill="#fff" />
          <path d="M0.5 0L25 23.5" stroke="#c8c9ce" strokeWidth="1" />
        </svg>
      </aside>
    </div>

    <StatusBar />

    <button
      type="button"
      aria-label="Page actions"
      className="fixed right-9 bottom-[146px] flex size-[54px] items-center justify-center rounded-full bg-[#004bff] shadow-md"
    >
      <svg viewBox="0 0 18 12" className="h-3 w-[18px]" stroke="#fff" strokeWidth="2">
        <path d="M0 1h18M0 6h18M0 11h18" />
      </svg>
    </button>
    <button
      type="button"
      aria-label="AIMMS menu"
      className="fixed right-8 bottom-[69px] flex size-[62px] items-center justify-center rounded-full bg-white shadow-lg"
    >
      <Logo className="h-8 w-[42px]" />
    </button>
  </div>
);

export default App;
